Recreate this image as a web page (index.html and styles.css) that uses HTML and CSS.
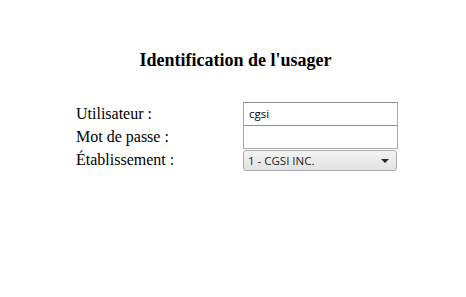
FILE: index.html
```html
<!DOCTYPE html>
<html>
<head>
<meta charset="utf-8">
<link rel="stylesheet" href="styles.css">
</head>
<body>
<div class="page">
  <h1 class="title">Identification de l'usager</h1>
  <div class="form">
    <div class="row">
      <span class="label">Utilisateur :</span>
      <div class="field">cgsi</div>
    </div>
    <div class="row">
      <span class="label">Mot de passe :</span>
      <div class="field"></div>
    </div>
    <div class="row">
      <span class="label">Établissement :</span>
      <div class="select"><span>1 - CGSI INC.</span><span class="arrow"></span></div>
    </div>
  </div>
</div>
</body>
</html>
```
FILE: styles.css
```css
html, body { margin: 0; padding: 0; background: #fff; }
body { font-family: "Liberation Serif", "Times New Roman", serif; color: #000; width: 466px; height: 297px; overflow: hidden; }
.page { padding-top: 49px; }
.title { margin: 0; font-size: 18px; font-weight: bold; text-align: center; padding-left: 5px; line-height: 22px; }
.form { margin-top: 31px; padding-left: 76px; display: flex; flex-direction: column; }
.row { display: flex; align-items: center; height: 23px; }
.label { width: 167px; font-size: 16px; line-height: 20px; }
.field { box-sizing: border-box; width: 155px; height: 24px; border: 1px solid #a9a9a9; border-top-color: #8f8f8f; background: #fff; font-family: "Open Sans", "DejaVu Sans", sans-serif; font-size: 11.5px; padding: 3px 5px; line-height: 16px; margin-bottom: -1px; }
.select { box-sizing: border-box; width: 154px; height: 21px; margin-top: 2px; border: 1px solid #acacac; border-radius: 3px; background: linear-gradient(#f2f2f2, #e3e3e3); font-family: "Open Sans", "DejaVu Sans", sans-serif; font-size: 11.5px; padding: 0 4px; display: flex; align-items: center; justify-content: space-between; color: #222; }
.arrow { width: 0; height: 0; border-left: 4px solid transparent; border-right: 4px solid transparent; border-top: 4px solid #222; margin-right: 3px; }
```
